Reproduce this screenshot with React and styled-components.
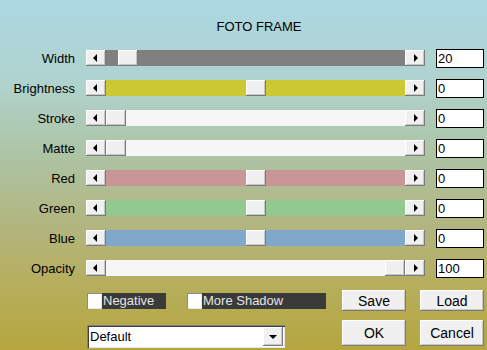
import React from 'react'
import styled, { createGlobalStyle } from 'styled-components';

const Global = createGlobalStyle`
  html, body {
    margin: 0;
    padding: 0;
    overflow: hidden;
  }
`;

const Window = styled.div`
  width: 487px;
  height: 350px;
  box-sizing: border-box;
  background: linear-gradient(to bottom, #acd8e2 0%, #b0d2cc 25%, #adc3a2 45%, #b2b57e 65%, #b6ae5c 82%, #b5a640 100%);
  font-family: "Liberation Sans", Arial, sans-serif;
  font-size: 13px;
  color: #000;
  overflow: hidden;
`;

const Title = styled.div`
  padding-top: 19px;
  padding-left: 31px;
  line-height: 15px;
  text-align: center;
`;

const Rows = styled.div`
  margin-top: 9px;
  display: grid;
  grid-template-columns: 75px 339px 48px;
  column-gap: 11px;
  grid-auto-rows: 30px;
  align-items: center;
`;

const Label = styled.div`
  text-align: right;
  line-height: 15px;
`;

const Scrollbar = styled.div`
  display: flex;
  height: 16px;
`;

const raised = `
  background: #f0f0f0;
  box-shadow: inset -1px -1px #7a7a7a, inset 1px 1px #ffffff, inset -2px -2px #c8c8c8;
`;

const ArrowButton = styled.div`
  ${raised}
  width: 20px;
  height: 16px;
  display: flex;
  align-items: center;
  justify-content: center;
  flex-shrink: 0;
`;

const Triangle = styled.span`
  width: 0;
  height: 0;
  border-top: 4px solid transparent;
  border-bottom: 4px solid transparent;
  ${p => p.$dir === 'left'
    ? 'border-right: 4px solid #000; margin-right: 2px;'
    : 'border-left: 4px solid #000; margin-left: 2px;'}
`;

const Track = styled.div`
  position: relative;
  flex: 1;
  background: ${p => p.$color};
`;

const Thumb = styled.div`
  ${raised}
  position: absolute;
  top: 0;
  width: 20px;
  height: 16px;
`;

const ValueBox = styled.input`
  box-sizing: border-box;
  width: 48px;
  height: 19px;
  margin: 0;
  padding: 0 1px;
  border: 1px solid #000;
  background: #fff;
  font-family: "Liberation Sans", Arial, sans-serif;
  font-size: 13px;
  color: #000;
  outline: none;
`;

const Bottom = styled.div`
  margin-top: 7px;
  padding-left: 87px;
  display: grid;
  grid-template-columns: 241px 64px 64px;
  grid-template-rows: 21px 26px;
  column-gap: 14px;
  row-gap: 9px;
`;

const Checks = styled.div`
  display: flex;
  align-items: center;
  gap: 21px;
`;

const Check = styled.div`
  display: flex;
  align-items: center;
  height: 16px;
`;

const Box = styled.span`
  width: 15px;
  height: 16px;
  box-sizing: border-box;
  background: #fff;
  box-shadow: inset 1px 1px #8a8a8a, inset -1px -1px #e8e8e8;
`;

const CheckText = styled.span`
  width: ${p => p.$w}px;
  height: 16px;
  line-height: 16px;
  padding-left: 1px;
  box-sizing: border-box;
  background: #3a3a3a;
  color: #e4e4e4;
`;

const Button = styled.div`
  ${raised}
  display: flex;
  align-items: center;
  justify-content: center;
  font-size: 14px;
`;

const Select = styled.div`
  margin-top: 5px;
  width: 198px;
  height: 23px;
  box-sizing: border-box;
  display: flex;
  align-items: center;
  justify-content: space-between;
  padding: 2px 2px 2px 3px;
  background: #fff;
  box-shadow: inset 1px 1px #808080, inset 2px 2px #404040, inset -1px -1px #e8e8e8;
`;

const DropButton = styled.div`
  ${raised}
  width: 20px;
  height: 19px;
  display: flex;
  align-items: center;
  justify-content: center;
`;

const DownTriangle = styled.span`
  width: 0;
  height: 0;
  border-left: 4px solid transparent;
  border-right: 4px solid transparent;
  border-top: 4px solid #000;
`;

const sliders = [
  { name: 'Width', color: '#808080', value: 20, min: 10, max: 240 },
  { name: 'Brightness', color: '#cbc933', value: 0, min: -100, max: 100 },
  { name: 'Stroke', color: '#f6f6f6', value: 0, min: 0, max: 100 },
  { name: 'Matte', color: '#f6f6f6', value: 0, min: 0, max: 100 },
  { name: 'Red', color: '#c99697', value: 0, min: -100, max: 100 },
  { name: 'Green', color: '#93c893', value: 0, min: -100, max: 100 },
  { name: 'Blue', color: '#7fa8cb', value: 0, min: -100, max: 100 },
  { name: 'Opacity', color: '#f6f6f6', value: 100, min: 0, max: 100 },
];

const TRAVEL = 279;

const App = () => {
  return (
    <Window>
      <Global />
      <Title>FOTO FRAME</Title>

      <Rows>
        {sliders.map(s => (
          <React.Fragment key={s.name}>
            <Label>{s.name}</Label>
            <Scrollbar>
              <ArrowButton><Triangle $dir="left" /></ArrowButton>
              <Track $color={s.color}>
                <Thumb style={{ left: Math.round(((s.value - s.min) / (s.max - s.min)) * TRAVEL) }} />
              </Track>
              <ArrowButton><Triangle $dir="right" /></ArrowButton>
            </Scrollbar>
            <ValueBox readOnly value={s.value} />
          </React.Fragment>
        ))}
      </Rows>

      <Bottom>
        <Checks>
          <Check>
            <Box />
            <CheckText $w={64}>Negative</CheckText>
          </Check>
          <Check>
            <Box />
            <CheckText $w={124}>More Shadow</CheckText>
          </Check>
        </Checks>
        <Button>Save</Button>
        <Button>Load</Button>

        <Select>
          <span>Default</span>
          <DropButton><DownTriangle /></DropButton>
        </Select>
        <Button>OK</Button>
        <Button>Cancel</Button>
      </Bottom>
    </Window>
  )
}

export default App
